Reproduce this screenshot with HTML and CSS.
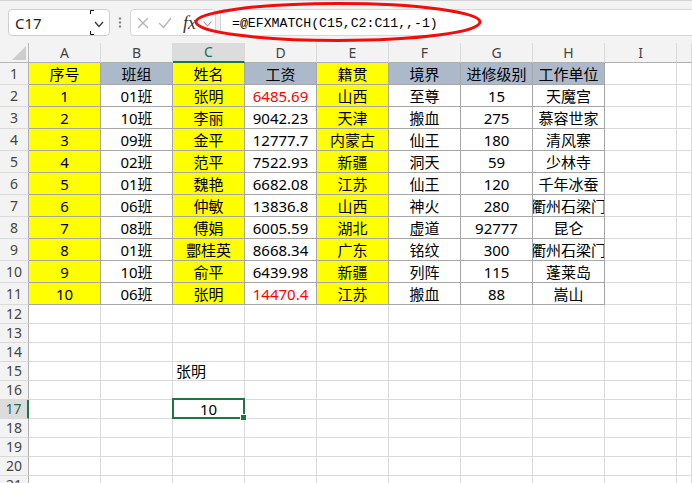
FILE: index.html
```html
<!DOCTYPE html>
<html lang="zh-CN">
<head>
<meta charset="utf-8">
<title>Sheet</title>
<link rel="stylesheet" href="styles.css">
</head>
<body>
<div class="app">
  <div class="fbar">
    <div class="namebox">
      <span class="ref">C17</span>
      <svg class="marks" width="4" height="25" viewBox="0 0 4 25"><path d="M4 0.5H0.5V4M0.5 21V24.5H4" fill="none" stroke="#111" stroke-width="1"/></svg>
      <svg class="nchev" width="10" height="25" viewBox="0 0 10 25"><path d="M1 12L5 16.5L9 12" fill="none" stroke="#333" stroke-width="1.2"/></svg>
    </div>
    <svg class="dots" width="6" height="27" viewBox="0 0 6 27"><circle cx="3" cy="9.5" r="1.2" fill="#8a8a8a"/><circle cx="3" cy="13.5" r="1.2" fill="#8a8a8a"/><circle cx="3" cy="17.5" r="1.2" fill="#8a8a8a"/></svg>
    <div class="fbtns">
      <svg class="ico-x" width="12" height="12" viewBox="0 0 12 12"><path d="M1 1L11 11M11 1L1 11" stroke="#b4b4b4" stroke-width="1.3" fill="none"/></svg>
      <svg class="ico-ok" width="14" height="12" viewBox="0 0 14 12"><path d="M1 6L5.5 10.5L13 1" stroke="#b4b4b4" stroke-width="1.3" fill="none"/></svg>
      <span class="fx">fx</span>
      <svg class="fchev" width="9" height="6" viewBox="0 0 9 6"><path d="M0.5 0.5L4.5 5L8.5 0.5" fill="none" stroke="#9a9a9a" stroke-width="1.1"/></svg>
    </div>
    <div class="finput">=@EFXMATCH(C15,C2:C11,,-1)</div>
  </div>

  <div class="sheet">
    <div class="corner"><svg width="14" height="14" viewBox="0 0 14 14"><polygon points="14,0 14,14 0,14" fill="#cdcdcd"/></svg></div>
    <div class="ch">A</div><div class="ch">B</div><div class="ch chs">C</div><div class="ch">D</div><div class="ch">E</div><div class="ch">F</div><div class="ch">G</div><div class="ch">H</div><div class="ch">I</div><div class="ch"></div>

    <div class="rh">1</div><div class="d y">序号</div><div class="d g">班组</div><div class="d y">姓名</div><div class="d g">工资</div><div class="d y">籍贯</div><div class="d g">境界</div><div class="d g">进修级别</div><div class="d g">工作单位</div><div class="c"></div><div class="c"></div>
    <div class="rh">2</div><div class="d y">1</div><div class="d">01班</div><div class="d y">张明</div><div class="d r">6485.69</div><div class="d y">山西</div><div class="d">至尊</div><div class="d">15</div><div class="d">天魔宫</div><div class="c"></div><div class="c"></div>
    <div class="rh">3</div><div class="d y">2</div><div class="d">10班</div><div class="d y">李丽</div><div class="d">9042.23</div><div class="d y">天津</div><div class="d">搬血</div><div class="d">275</div><div class="d">慕容世家</div><div class="c"></div><div class="c"></div>
    <div class="rh">4</div><div class="d y">3</div><div class="d">09班</div><div class="d y">金平</div><div class="d">12777.7</div><div class="d y">内蒙古</div><div class="d">仙王</div><div class="d">180</div><div class="d">清风寨</div><div class="c"></div><div class="c"></div>
    <div class="rh">5</div><div class="d y">4</div><div class="d">02班</div><div class="d y">范平</div><div class="d">7522.93</div><div class="d y">新疆</div><div class="d">洞天</div><div class="d">59</div><div class="d">少林寺</div><div class="c"></div><div class="c"></div>
    <div class="rh">6</div><div class="d y">5</div><div class="d">01班</div><div class="d y">魏艳</div><div class="d">6682.08</div><div class="d y">江苏</div><div class="d">仙王</div><div class="d">120</div><div class="d">千年冰蚕</div><div class="c"></div><div class="c"></div>
    <div class="rh">7</div><div class="d y">6</div><div class="d">06班</div><div class="d y">仲敏</div><div class="d">13836.8</div><div class="d y">山西</div><div class="d">神火</div><div class="d">280</div><div class="d">衢州石梁门</div><div class="c"></div><div class="c"></div>
    <div class="rh">8</div><div class="d y">7</div><div class="d">08班</div><div class="d y">傅娟</div><div class="d">6005.59</div><div class="d y">湖北</div><div class="d">虚道</div><div class="d">92777</div><div class="d">昆仑</div><div class="c"></div><div class="c"></div>
    <div class="rh">9</div><div class="d y">8</div><div class="d">01班</div><div class="d y">酆桂英</div><div class="d">8668.34</div><div class="d y">广东</div><div class="d">铭纹</div><div class="d">300</div><div class="d">衢州石梁门</div><div class="c"></div><div class="c"></div>
    <div class="rh">10</div><div class="d y">9</div><div class="d">10班</div><div class="d y">俞平</div><div class="d">6439.98</div><div class="d y">新疆</div><div class="d">列阵</div><div class="d">115</div><div class="d">蓬莱岛</div><div class="c"></div><div class="c"></div>
    <div class="rh">11</div><div class="d y">10</div><div class="d">06班</div><div class="d y">张明</div><div class="d r">14470.4</div><div class="d y">江苏</div><div class="d">搬血</div><div class="d">88</div><div class="d">嵩山</div><div class="c"></div><div class="c"></div>

    <div class="rh s">12</div><div class="c s"></div><div class="c s"></div><div class="c s"></div><div class="c s"></div><div class="c s"></div><div class="c s"></div><div class="c s"></div><div class="c s"></div><div class="c s"></div><div class="c s"></div>
    <div class="rh s">13</div><div class="c s"></div><div class="c s"></div><div class="c s"></div><div class="c s"></div><div class="c s"></div><div class="c s"></div><div class="c s"></div><div class="c s"></div><div class="c s"></div><div class="c s"></div>
    <div class="rh s">14</div><div class="c s"></div><div class="c s"></div><div class="c s"></div><div class="c s"></div><div class="c s"></div><div class="c s"></div><div class="c s"></div><div class="c s"></div><div class="c s"></div><div class="c s"></div>
    <div class="rh s">15</div><div class="c s"></div><div class="c s"></div><div class="c s l">张明</div><div class="c s"></div><div class="c s"></div><div class="c s"></div><div class="c s"></div><div class="c s"></div><div class="c s"></div><div class="c s"></div>
    <div class="rh s">16</div><div class="c s"></div><div class="c s"></div><div class="c s"></div><div class="c s"></div><div class="c s"></div><div class="c s"></div><div class="c s"></div><div class="c s"></div><div class="c s"></div><div class="c s"></div>
    <div class="rh s rhs">17</div><div class="c s"></div><div class="c s"></div><div class="c s sel">10</div><div class="c s"></div><div class="c s"></div><div class="c s"></div><div class="c s"></div><div class="c s"></div><div class="c s"></div><div class="c s"></div>
    <div class="rh s">18</div><div class="c s"></div><div class="c s"></div><div class="c s"></div><div class="c s"></div><div class="c s"></div><div class="c s"></div><div class="c s"></div><div class="c s"></div><div class="c s"></div><div class="c s"></div>
    <div class="rh s">19</div><div class="c s"></div><div class="c s"></div><div class="c s"></div><div class="c s"></div><div class="c s"></div><div class="c s"></div><div class="c s"></div><div class="c s"></div><div class="c s"></div><div class="c s"></div>
    <div class="rh s">20</div><div class="c s"></div><div class="c s"></div><div class="c s"></div><div class="c s"></div><div class="c s"></div><div class="c s"></div><div class="c s"></div><div class="c s"></div><div class="c s"></div><div class="c s"></div>
    <div class="rh s">21</div><div class="c s"></div><div class="c s"></div><div class="c s"></div><div class="c s"></div><div class="c s"></div><div class="c s"></div><div class="c s"></div><div class="c s"></div><div class="c s"></div><div class="c s"></div>
  </div>

  <svg class="annot" width="692" height="50" viewBox="0 0 692 50"><ellipse cx="338" cy="22" rx="142" ry="18.5" fill="none" stroke="#f20d0d" stroke-width="3"/></svg>
</div>
</body>
</html>
```

FILE: styles.css
```css
html, body {
  margin: 0;
  padding: 0;
  background: #ffffff;
}
body {
  width: 692px;
  height: 483px;
  overflow: hidden;
  font-family: "Noto Sans", "Noto Sans CJK SC", sans-serif;
  color: #000;
}
.app {
  position: relative;
  width: 692px;
  height: 483px;
  overflow: hidden;
}

/* formula bar */
.fbar {
  height: 43px;
  box-sizing: border-box;
  border-top: 1px solid #d4d4d4;
  background: #f3f3f3;
  display: flex;
  align-items: flex-start;
  padding: 8px 0 0 8px;
}
.namebox {
  width: 102px;
  height: 27px;
  box-sizing: border-box;
  border: 1px solid #cfcfcf;
  border-radius: 4px;
  background: #fff;
  display: flex;
  align-items: center;
  padding-left: 6px;
}
.ref {
  flex: 1;
  font-size: 15px;
  color: #1f1f1f;
  line-height: 20px;
}
.marks { display: block; }
.nchev { display: block; margin-right: 5px; }
.dots { display: block; margin: 0 7px 0 7px; }
.fbtns {
  width: 86px;
  height: 27px;
  box-sizing: border-box;
  border: 1px solid #d6d6d6;
  border-radius: 4px;
  background: #fff;
  display: flex;
  align-items: center;
  padding-left: 6px;
}
.ico-x { display: block; margin-top: 1px; }
.ico-ok { display: block; margin-left: 9px; margin-top: 1px; }
.fx {
  font-family: "Liberation Serif", serif;
  font-style: italic;
  font-size: 18px;
  color: #333;
  margin-left: 11px;
  line-height: 20px;
}
.fchev { display: block; margin-left: 7px; margin-top: 3px; }
.finput {
  flex: 1;
  margin-left: 4px;
  margin-right: -8px;
  height: 27px;
  box-sizing: border-box;
  border: 1px solid #d6d6d6;
  border-radius: 4px;
  background: #fff;
  padding: 3px 0 0 11px;
  font-family: "Liberation Mono", monospace;
  font-size: 13.2px;
  line-height: 22px;
  color: #000;
  white-space: nowrap;
}

/* sheet */
.sheet {
  display: grid;
  grid-template-columns: 29px repeat(9, 72px) 1fr;
  grid-template-rows: 20px repeat(11, 22px) repeat(10, 19px);
}
.corner {
  background: #f3f3f3;
  box-sizing: border-box;
  border-right: 1px solid #b8b8b8;
  border-bottom: 1px solid #b8b8b8;
  display: flex;
  align-items: flex-end;
  justify-content: flex-end;
  padding: 0 2px 2px 0;
}
.corner svg { display: block; }
.ch {
  background: #f3f3f3;
  box-sizing: border-box;
  border-right: 1px solid #dadada;
  border-bottom: 1px solid #b0b0b0;
  display: flex;
  align-items: flex-end;
  justify-content: center;
  font-size: 14px;
  line-height: 18px;
  color: #444;
}
.ch.chs {
  background: #dcdcdc;
  border-bottom: 2px solid #217346;
  color: #1f6b4a;
}
.rh {
  background: #f3f3f3;
  box-sizing: border-box;
  border-right: 1px solid #b0b0b0;
  border-bottom: 1px solid #dadada;
  display: flex;
  align-items: center;
  justify-content: center;
  font-size: 14px;
  line-height: 18px;
  color: #444;
}
.rh.rhs {
  background: #dcdcdc;
  border-right: 2px solid #217346;
  color: #1f6b4a;
}
.c, .d {
  box-sizing: border-box;
  border-right: 1px solid #dadada;
  border-bottom: 1px solid #dadada;
  display: flex;
  align-items: center;
  justify-content: center;
  font-size: 15px;
  line-height: 20px;
  white-space: nowrap;
  overflow: hidden;
  background: #fff;
}
.d { border-color: #a6a6a6; }
.y { background: #ffff00; }
.g { background: #acb9ca; }
.r { color: #ff0000; }
.s { line-height: 18px; }
.c.l {
  justify-content: flex-start;
  align-items: flex-end;
  padding-left: 3px;
}
.c.sel {
  position: relative;
  overflow: visible;
  z-index: 2;
  background: transparent;
}
.c.sel::after {
  content: "";
  position: absolute;
  left: -1px;
  top: -2px;
  right: -1px;
  bottom: -1px;
  border: 2px solid #217346;
}
.c.sel::before {
  content: "";
  position: absolute;
  right: -3px;
  bottom: -3px;
  width: 5px;
  height: 5px;
  background: #217346;
  border: 1px solid #fff;
  z-index: 3;
}

.annot {
  position: absolute;
  left: 0;
  top: 0;
  pointer-events: none;
}
```
